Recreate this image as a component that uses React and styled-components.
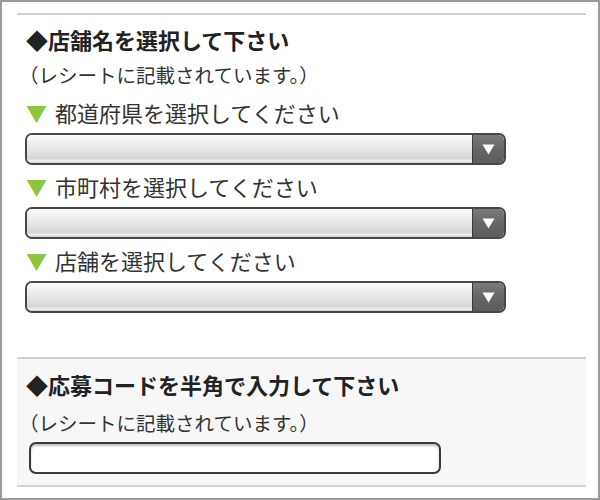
import React from "react";
import styled, { createGlobalStyle } from "styled-components";

const Global = createGlobalStyle`
  html, body { margin: 0; padding: 0; background: #fff; }
  body { font-family: "Noto Sans CJK JP", "Noto Sans", sans-serif; color: #333; }
  * { box-sizing: border-box; }
`;

const Frame = styled.div`
  width: 600px;
  height: 500px;
  border: 2px solid #9a9a9a;
  padding: 11px 12px 0 15px;
  overflow: hidden;
`;

const Section = styled.section`
  border-top: 2px solid #cfcfcf;
  border-bottom: ${(p) => (p.$closed ? "2px solid #d4d4d4" : "none")};
  background: ${(p) => (p.$shaded ? "#f7f7f7" : "#fff")};
  padding: ${(p) => p.$pad};
`;

const Heading = styled.h2`
  margin: 0;
  font-size: 22px;
  font-weight: 700;
  color: #222;
  line-height: ${(p) => p.$lh}px;
  white-space: nowrap;
`;

const Note = styled.p`
  margin: 0 0 0 -7px;
  padding-top: ${(p) => p.$pt || 0}px;
  font-size: 19.5px;
  color: #333;
  line-height: ${(p) => p.$lh}px;
  white-space: nowrap;
`;

const Label = styled.div`
  display: flex;
  align-items: center;
  gap: 8px;
  height: 42px;
  font-size: 22px;
  font-weight: 400;
  color: #333;
  white-space: nowrap;
`;

const Mark = styled.span`
  color: #8cc63f;
  font-size: 21px;
  line-height: 1;
`;

const SelectBox = styled.div`
  display: flex;
  width: 481px;
  height: 32px;
  margin-left: -1px;
  border: 2px solid #474747;
  border-radius: 7px;
  overflow: hidden;
`;

const Field = styled.div`
  flex: 1;
  background: linear-gradient(
    to bottom,
    #fbfbfb 0%,
    #f0f0f0 25%,
    #e4e4e4 55%,
    #d6d6d6 85%,
    #f2f2f2 92%,
    #cfcfcf 100%
  );
`;

const ArrowButton = styled.div`
  width: 32px;
  display: flex;
  align-items: center;
  justify-content: center;
  background: linear-gradient(to bottom, #7a7a7a 0%, #666 50%, #5c5c5c 100%);
  border-left: 1px solid #3a3a3a;
`;

const TextInput = styled.input`
  display: block;
  width: 412px;
  height: 32px;
  margin-left: 3px;
  border: 2px solid #3a3a3a;
  border-radius: 7px;
  background: #fff;
  box-shadow: inset 0 2px 2px rgba(0, 0, 0, 0.25);
  outline: none;
  font-size: 16px;
`;

const Arrow = () => (
  <svg width="13" height="11" viewBox="0 0 13 11">
    <path d="M0.5 0.5 H12.5 L6.5 10.5 Z" fill="#fff" />
  </svg>
);

const Dropdown = ({ label }) => (
  <>
    <Label>
      <Mark>▼</Mark>
      <span>{label}</span>
    </Label>
    <SelectBox>
      <Field />
      <ArrowButton>
        <Arrow />
      </ArrowButton>
    </SelectBox>
  </>
);

export default function App() {
  return (
    <>
      <Global />
      <Frame>
        <Section $pad="8px 0 44px 9px">
          <Heading $lh={32}>◆店舗名を選択して下さい</Heading>
          <Note $pt={3} $lh={33}>（レシートに記載されています。）</Note>
          <Dropdown label="都道府県を選択してください" />
          <Dropdown label="市町村を選択してください" />
          <Dropdown label="店舗を選択してください" />
        </Section>
        <Section $shaded $closed $pad="5px 0 11px 9px">
          <Heading $lh={40}>◆応募コードを半角で入力して下さい</Heading>
          <Note $lh={38}>（レシートに記載されています。）</Note>
          <TextInput type="text" />
        </Section>
      </Frame>
    </>
  );
}
